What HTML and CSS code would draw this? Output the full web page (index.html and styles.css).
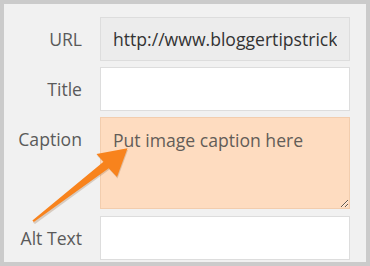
FILE: index.html
```html
<!DOCTYPE html>
<html lang="en">
<head>
    <meta charset="UTF-8">
    <title>Image details</title>
    <link rel="stylesheet" href="styles.css">
</head>
<body>
    <div class="panel">
        <div class="fields">
            <label class="label">URL</label>
            <input class="field readonly" type="text" value="http://www.bloggertipstricks.com/image.png" readonly>

            <label class="label">Title</label>
            <input class="field" type="text">

            <label class="label label-top">Caption</label>
            <textarea class="field caption">Put image caption here</textarea>

            <label class="label">Alt Text</label>
            <input class="field" type="text">
        </div>
    </div>

    <!-- callout arrow pointing at the caption box -->
    <svg class="arrow" width="370" height="266" viewBox="0 0 370 266">
        <polygon class="arrow-shadow" points="33,222.5 104,163 97,155.5 128,150 117.5,178.5 109.5,169.5 35,224"/>
        <polygon class="arrow-body" points="32.4,220.4 103.5,161.8 96.5,154 127.5,148.2 117,177 108.7,168.2 33.8,222"/>
    </svg>
</body>
</html>
```

FILE: styles.css
```css
body {
    margin: 0;
    padding: 4px;
    background: #cbcbcb;
    font-family: 'Open Sans', 'Noto Sans', sans-serif;
    width: 370px;
    height: 266px;
    box-sizing: border-box;
    overflow: hidden;
}
.panel {
    background: #f1f1f1;
    height: 258px;
    padding-top: 13px;
    box-sizing: border-box;
}
.fields {
    display: grid;
    grid-template-columns: 78px 250px;
    column-gap: 18px;
    row-gap: 6px;
}
.label {
    font-size: 17.6px;
    color: #5a5a5a;
    text-align: right;
    align-self: center;
    line-height: 24px;
}
.label-top {
    align-self: start;
    padding-top: 10px;
}
.field {
    box-sizing: border-box;
    width: 250px;
    height: 44px;
    margin: 0;
    border: 1px solid #dddddd;
    background: #fff;
    padding: 0 12px;
    font-family: 'Open Sans', 'Noto Sans', sans-serif;
    font-size: 17.6px;
    color: #333;
    outline: none;
}
.readonly {
    background: #ececec;
    color: #333;
}
.caption {
    height: 92px;
    padding: 10px 12px;
    line-height: 24px;
    background: #fedcc0;
    border-color: #f2cdae;
    color: #635d58;
    resize: vertical;
    margin-bottom: 1px;
}
.arrow {
    position: absolute;
    left: 0;
    top: 0;
    pointer-events: none;
}
.arrow-body {
    fill: #f8831d;
}
.arrow-shadow {
    fill: #8a5a30;
    opacity: 0.25;
}
```
